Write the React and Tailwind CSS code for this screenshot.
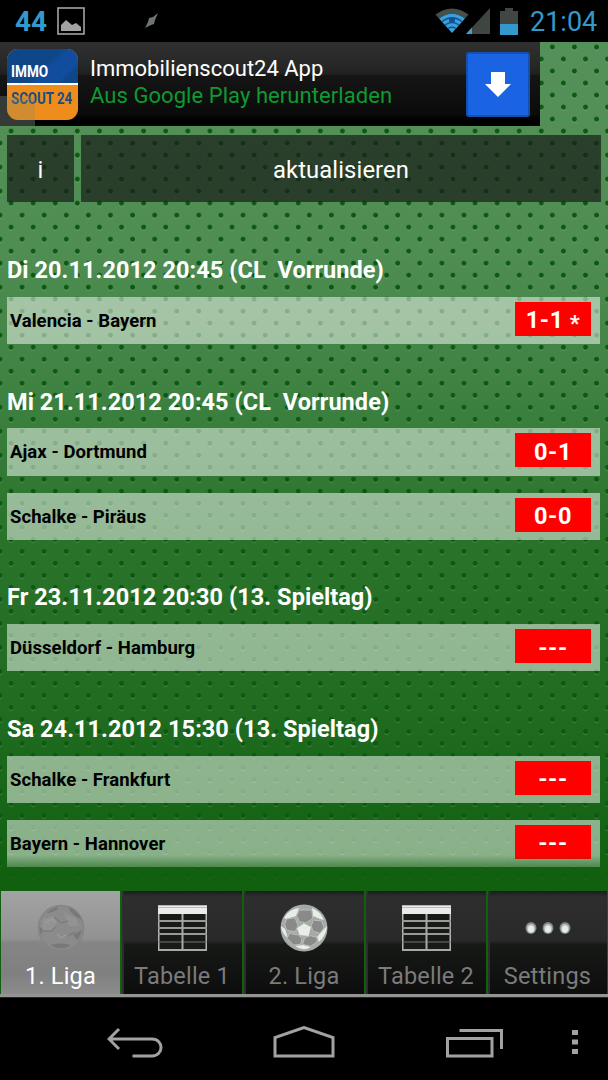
import clsx from "clsx";

const matchDays = [
  {
    title: "Di 20.11.2012 20:45 (CL  Vorrunde)",
    matches: [{ teams: "Valencia - Bayern", score: "1-1", live: true }],
  },
  {
    title: "Mi 21.11.2012 20:45 (CL  Vorrunde)",
    matches: [
      { teams: "Ajax - Dortmund", score: "0-1" },
      { teams: "Schalke - Piräus", score: "0-0" },
    ],
  },
  {
    title: "Fr 23.11.2012 20:30 (13. Spieltag)",
    matches: [{ teams: "Düsseldorf - Hamburg", score: "---" }],
  },
  {
    title: "Sa 24.11.2012 15:30 (13. Spieltag)",
    matches: [
      { teams: "Schalke - Frankfurt", score: "---" },
      { teams: "Bayern - Hannover", score: "---" },
    ],
  },
];

const tabs = [
  { label: "1. Liga", icon: "ball", active: true },
  { label: "Tabelle 1", icon: "table" },
  { label: "2. Liga", icon: "ball" },
  { label: "Tabelle 2", icon: "table" },
  { label: "Settings", icon: "dots" },
];

function StatusBar() {
  return (
    <div className="flex h-[42px] shrink-0 items-center bg-black pr-[10px] pl-[15px]">
      <span className="w-[42px] pt-px text-[28px] leading-none font-bold text-[#3399cc]">44</span>
      <svg className="h-[28px] w-[28px]" viewBox="0 0 28 28">
        <rect x="1" y="1" width="26" height="26" fill="none" stroke="#a3a3a3" strokeWidth="1.6" />
        <path d="M4 24v-6l5-5 6 5 4-2 5 4v4z" fill="#a3a3a3" />
      </svg>
      <svg className="ml-[60px] h-[16px] w-[14px]" viewBox="0 0 14 16">
        <path d="M13 0 10 7l-1 4-3 1L0 15l3-6 1-4 4-1z" fill="#6f7570" />
      </svg>
      <div className="grow" />
      <svg className="h-[26px] w-[56px]" viewBox="0 0 56 26">
        <path d="M0.500 6.500Q17 -5.500 33.500 6.500L30 10.500Q17 1 4 10.500z" fill="#46504a" />
        <path d="M4 10.500Q17 1 30 10.500L17 25z" fill="#3aa0dc" />
        <path
          d="M7 13.500Q17 6 27 13.500M10 17Q17 12 24 17M13 20.500Q17 18 21 20.500"
          fill="none"
          stroke="#12508c"
          strokeWidth="1.300"
        />
        <circle cx="17" cy="12" r="3" fill="#12509a" />
        <path d="M31 26 55 0V26z" fill="#3f4540" />
        <path d="M31 26 37 19.500V26z" fill="#3aa0dc" />
      </svg>
      <svg className="ml-[9px] h-[27px] w-[18px]" viewBox="0 0 18 27">
        <path d="M5 0h8v3h5v24H0V3h5z" fill="#424642" />
        <path d="M0 16h18v11H0z" fill="#3399cc" />
      </svg>
      <span className="ml-[12px] w-[68px] pt-[2px] text-[27px] leading-none text-[#3399cc]">21:04</span>
    </div>
  );
}

function AdBanner() {
  return (
    <div className="flex h-[84px] w-[540px] bg-[linear-gradient(#303030_0,#262626_30%,#202020_38%,#151515_40%,#0b0b0b_85%,#000_93%)]">
      <div className="relative w-[90px] shrink-0">
        <div className="absolute bottom-0 left-0 h-[30px] w-[35px] bg-[#343a36]" />
        <div className="absolute top-[7px] left-[7px] h-[71px] w-[71px] overflow-hidden rounded-[11px] bg-[#ee8c1c]">
          <div className="flex h-[36px] items-end border-b-2 border-white bg-[linear-gradient(135deg,#0f4688_50%,#124c9c_60%,#124c9c_80%,#0f4688_85%)] pb-[3px] pl-[4px] text-[16px] leading-[16px] font-bold text-white">
            <span className="origin-left scale-x-[0.850]">IMMO</span>
          </div>
          <div className="pt-[6px] pl-[4px] text-[16px] leading-[16px] font-bold text-[#184c84]">
            <span className="inline-block origin-left scale-x-[0.830] whitespace-nowrap">SCOUT 24</span>
          </div>
          <div className="absolute bottom-0 left-0 h-[23px] w-[28px] bg-[#8f8f62]/30" />
        </div>
      </div>
      <div className="grow pt-[13px] text-[22px] leading-[27px] whitespace-nowrap">
        <div className="text-white">Immobilienscout24 App</div>
        <div className="tracking-[0.060px] text-[#0f9a31]">Aus Google Play herunterladen</div>
      </div>
      <div className="mt-[10px] mr-[10px] flex h-[65px] w-[64px] items-center justify-center rounded-[3px] border-2 border-[#1450ad] bg-[#1a64e4]">
        <svg className="h-[26px] w-[26px]" viewBox="0 0 26 26">
          <path d="M6 0h14v12h6L13 25 0 12h6z" fill="#fff" />
        </svg>
      </div>
    </div>
  );
}

function BallIcon({ active }) {
  if (active) {
    return (
      <svg className="h-[48px] w-[48px]" viewBox="0 0 48 48" fill="none">
        <circle cx="24" cy="24" r="22.500" fill="#8b8b8b" stroke="#858585" strokeWidth="1.500" />
        <path d="M6 15 17 12 20 18 15 26 5 28zM27 9 39 14 42 22 32 22z" fill="#939393" />
        <path
          d="M10 9Q15 4 21 3L20 6 12 9zM32 3Q41 7 45 16L38 12 33 7zM2 22 6 26 4 31zM45 26 41 36 36 31zM13 41Q24 38 34 41Q24 48 13 41z"
          fill="#767a76"
        />
        <path d="M17 13 24 19 31 17M5 27H14L19 23M38 28 31 32" stroke="#7b7f7b" strokeWidth="1.500" />
        <path d="M8 19 15 15 18 18M20 30 24 34 29 31" stroke="#9c9c9c" strokeWidth="1.200" />
      </svg>
    );
  }
  return (
    <svg className="h-[48px] w-[48px]" viewBox="0 0 48 48">
      <circle cx="24" cy="24" r="23.500" fill="#a6aaa6" />
      <path
        d="M4 14Q9 5 19 4L16 12 6 15zM32 4Q40 7 44 16L40 15 33 12zM1 22 5 25 8 34Q2 30 1 22zM47 22Q46 32 39 38L37 33 44 25zM15 42 23 41 31 43Q23 48 15 42zM17 24 24 19.500 31 23 28.500 32 19.500 31z"
        fill="#e8ede8"
      />
      <g fill="#8a8a8a" stroke="#b9beb9" strokeWidth="1">
        <path d="M19.300 6 31.700 6 32.700 14.300 26 19 19.300 17.700 16.700 11.700z" />
        <path d="M6.700 15 15 13.700 18 21.700 15.300 27.700 6.700 26.300 4.700 20.300z" />
        <path d="M33.300 16 41.700 17 44 23.700 40 29.300 32.700 27 31.300 21.700z" />
        <path d="M9.300 29.300 18.300 31 22 34.300 20.700 40.300 13.300 41 7.300 34.300z" />
        <path d="M24.700 33.700 30.700 31.700 37.300 33.700 36.700 38.300 30.700 42.300 22.700 40.300z" />
      </g>
    </svg>
  );
}

function TableIcon() {
  return (
    <svg className="h-[46px] w-[49px]" viewBox="0 0 49 46">
      <rect x="0.750" y="0.750" width="47.500" height="44.500" fill="#181a18" stroke="#b4b6b4" strokeWidth="1.500" />
      <path d="M0 1h49v8H0z" fill="#e9ece8" />
      <path d="M0 2.500h49" stroke="#b9bcb8" />
      <path d="M0 16h49M0 23h49M0 29h49" stroke="#989a98" strokeWidth="2" />
      <path d="M0 37h49" stroke="#707570" />
      <path d="M24.500 9v36M0 45h49" stroke="#a8aaa8" strokeWidth="2" />
    </svg>
  );
}

function DotsIcon() {
  return (
    <svg className="h-[14px] w-[46px]" viewBox="0 0 46 14">
      {[6, 23, 40].map((x) => (
        <g key={x}>
          <ellipse cx={x} cy="7" rx="5.500" ry="6" fill="#7d837e" />
          <ellipse cx={x} cy="7.500" rx="4.300" ry="4.800" fill="#b4bab5" />
          <ellipse cx={x} cy="8" rx="3" ry="3.500" fill="#e6ece7" />
        </g>
      ))}
    </svg>
  );
}

function Tab({ label, icon, active }) {
  return (
    <div
      className={clsx(
        "flex h-[103px] flex-col items-center",
        active
          ? "bg-[linear-gradient(#a3a3a3_0,#929292_46%,#858585_50%,#808080_80%,#8c8c8c_100%)] text-white"
          : "bg-[linear-gradient(#1c1c1c_0,#2e2e2e_6%,#292929_48%,#171917_52%,#0c0d0c_100%)] text-[#7b7b7b] shadow-[inset_2px_0_0_#2c2e2c]"
      )}
    >
      <div className="flex h-[74px] items-center justify-center">
        {icon === "ball" && <BallIcon active={active} />}
        {icon === "table" && <TableIcon />}
        {icon === "dots" && <DotsIcon />}
      </div>
      <span className="text-[23.500px] leading-[22px] tracking-[0.200px] whitespace-nowrap">{label}</span>
    </div>
  );
}

function NavBar() {
  return (
    <div className="flex h-[82px] shrink-0 items-center bg-black pt-[7px] pl-[107px]">
      <svg className="h-[34px] w-[56px]" viewBox="0 0 56 34" fill="none" stroke="#a2a2a2" strokeWidth="3">
        <path d="M12 3 2 13 12 23M2 13H45C57 13 57 30 45 30H25.500" />
      </svg>
      <svg className="ml-[110px] h-[34px] w-[62px]" viewBox="0 0 62 34" fill="none" stroke="#a2a2a2" strokeWidth="3">
        <path d="M2 30V11.500L31 1.500 60 11.500V30z" />
      </svg>
      <svg className="ml-[111px] h-[34px] w-[58px]" viewBox="0 0 58 34" fill="none" stroke="#a2a2a2" strokeWidth="3">
        <path d="M1.500 12.500H46V30H1.500zM13.500 4.500H55.500V23" />
      </svg>
      <svg className="ml-[68px] h-[26px] w-[6px]" viewBox="0 0 6 26" fill="#a2a2a2">
        <path d="M0 0h6v5H0zM0 9.500h6v5H0zM0 19h6v5H0z" />
      </svg>
    </div>
  );
}

export default function App() {
  return (
    <div className="flex h-[1080px] w-[608px] flex-col overflow-hidden bg-black font-[Roboto,sans-serif]">
      <StatusBar />
      <div className="relative h-[849px] shrink-0 overflow-hidden bg-[linear-gradient(#55905a_0,#4f8d52_25%,#3c803f_43%,#2a732b_58%,#206c21_78%,#10600f_100%)]">
        {/* perforated texture: highlight layer, then the holes */}
        <div className="absolute inset-0 bg-[radial-gradient(circle,rgba(255,255,255,0.16)_2.1px,transparent_2.8px),radial-gradient(circle,rgba(255,255,255,0.16)_2.1px,transparent_2.8px)] bg-[length:22.1px_24.03px] bg-[position:11.050px_-5.930px,0px_6.070px]" />
        <div className="absolute inset-0 bg-[radial-gradient(circle,#0c5a12_2.100px,transparent_2.800px),radial-gradient(circle,#0c5a12_2.100px,transparent_2.800px)] bg-[length:22.1px_24.03px] bg-[position:11.050px_-6.930px,0px_5.070px]" />

        <div className="relative">
          <AdBanner />
          <div className="mt-[9px] flex h-[67px] gap-[7px] pl-[7px] text-[23.800px] text-white">
            <div className="flex w-[67px] items-center justify-center bg-[#191e19]/70 pt-[5px]">i</div>
            <div className="flex w-[520px] items-center justify-center bg-[#191e19]/70 pt-[5px] tracking-[0.100px]">
              aktualisieren
            </div>
          </div>
          <div className="pt-[10.700px] pr-[8px] pl-[7px]">
            {matchDays.map((day) => (
              <section key={day.title}>
                <h2 className="flex h-[84.300px] items-end pb-[12.700px] text-[23.500px] leading-[28px] font-bold tracking-[0.060px] whitespace-pre text-white">
                  {day.title}
                </h2>
                <div className="flex flex-col gap-[17px]">
                  {day.matches.map((match) => (
                    <div
                      key={match.teams}
                      className="flex h-[47.200px] justify-between bg-white/50 pr-[9px] pl-[3px]"
                    >
                      <span className="self-center pt-[2.500px] text-[18.500px] font-bold tracking-[0.050px] text-black">
                        {match.teams}
                      </span>
                      <div className="mt-[5px] flex h-[34px] w-[76px] items-center justify-center bg-[#ff0000] pt-[4px] text-[23.500px] font-bold tracking-[0.600px] text-white">
                        {match.score}
                        {match.live && <span className="ml-[6px] pt-[6px] text-[22px]">*</span>}
                      </div>
                    </div>
                  ))}
                </div>
              </section>
            ))}
          </div>
        </div>
        <div className="absolute inset-x-0 bottom-0 h-[36px] bg-linear-to-b from-[#10600f]/0 via-[#10600f]/60 via-40% to-[#10600f]" />
      </div>

      <div className="flex h-[107px] shrink-0 flex-col bg-[#12600f]">
        <div className="grid grid-cols-[119px_120px_120px_120px_119px] gap-[2px] pl-px">
          {tabs.map((tab) => (
            <Tab key={tab.label} {...tab} />
          ))}
        </div>
        <div className="h-[3px] bg-[#949494]" />
        <div className="h-px bg-[#0b3a0b]" />
      </div>
      <NavBar />
    </div>
  );
}
